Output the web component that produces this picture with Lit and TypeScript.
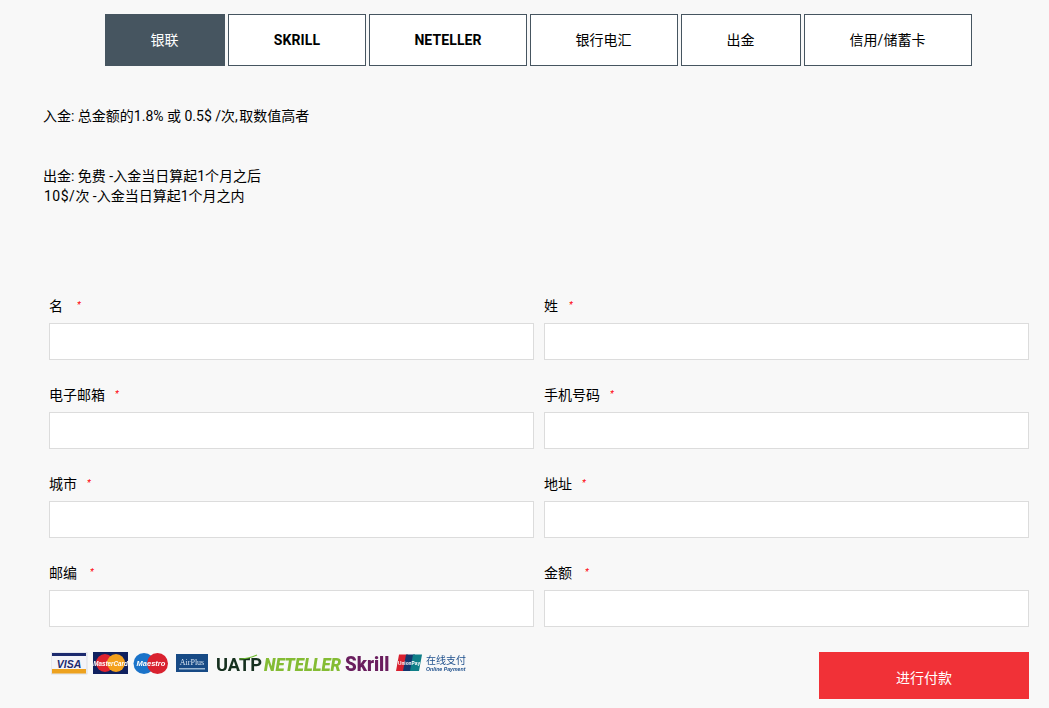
import { LitElement, html, css, svg } from "lit";
import { customElement } from "lit/decorators.js";

const tabs = [
  { t: "银联", w: 120, cls: "on" },
  { t: "SKRILL", w: 138, cls: "brand" },
  { t: "NETELLER", w: 158, cls: "brand" },
  { t: "银行电汇", w: 148, cls: "" },
  { t: "出金", w: 120, cls: "" },
  { t: "信用/储蓄卡", w: 168, cls: "" },
];
const fields = [
  ["名", 14], ["姓", 11], ["电子邮箱", 10], ["手机号码", 10],
  ["城市", 10], ["地址", 10], ["邮编", 13], ["金额", 13],
] as [string, number][];

const logos = svg`
  <svg class="logos" width="416" height="24" viewBox="51 652 416 24" xmlns="http://www.w3.org/2000/svg">
    <rect x="51" y="652" width="36" height="22" fill="#f4f4f8" stroke="#c9cbd8" stroke-width=".6"/>
    <rect x="52" y="653" width="34" height="3" fill="#1c2a6e"/>
    <rect x="52" y="669" width="34" height="4.5" fill="#eda21f"/>
    <text x="69" y="667.5" text-anchor="middle" font-family="Liberation Sans" font-size="10.5" font-weight="700" font-style="italic" fill="#1c2a6e">VISA</text>

    <rect x="93" y="652" width="35" height="22" fill="#10215f"/>
    <circle cx="105" cy="663" r="9" fill="#e0232e"/>
    <circle cx="116" cy="663" r="9" fill="#f4a11d"/>
    <text transform="translate(110.5 665.5) scale(.9 1)" text-anchor="middle" font-family="Liberation Sans" font-size="7" font-weight="700" font-style="italic" fill="#fff">MasterCard</text>

    <circle cx="144" cy="663.5" r="10.5" fill="#1a73c9"/>
    <circle cx="157.5" cy="663.5" r="10.5" fill="#d9222f"/>
    <text x="151" y="666" text-anchor="middle" font-family="Liberation Sans" font-size="7.5" font-weight="700" font-style="italic" fill="#fff">Maestro</text>

    <rect x="176" y="654" width="32" height="18" fill="#174a85"/>
    <text x="192" y="665" text-anchor="middle" font-family="Liberation Serif" font-size="8" fill="#d8e4f0">AirPlus</text>
    <rect x="179" y="668" width="26" height="1.5" fill="#9cb7d2"/>

    <text transform="translate(216 671) scale(.96 1)" font-family="Roboto" font-size="19" font-weight="700" fill="#16301f">UATP</text>
    <path d="M239 659 Q248 659 257 655" fill="none" stroke="#6fbd2e" stroke-width="1.2"/>

    <text transform="translate(264 671) scale(.88 1)" font-family="Roboto" font-size="19" font-weight="900" font-style="italic" fill="#84bc34">NETELLER</text>

    <text transform="translate(345 671) scale(.89 1)" font-family="Roboto" font-size="21" font-weight="900" fill="#6a1e5e">Skrill</text>

    <path d="M399 654.5h9l-3 16.5h-9z" fill="#d8202f"/>
    <path d="M406 654.5h9l-3 16.5h-9z" fill="#12386e"/>
    <path d="M413 654.5h9l-3 16.5h-9z" fill="#0f7f88"/>
    <text transform="translate(409 664.5) scale(.8 1)" text-anchor="middle" font-family="Liberation Sans" font-size="6" font-weight="700" fill="#fff">UnionPay</text>
    <text x="426" y="664" font-family="Noto Sans CJK SC" font-size="10" fill="#1d4f8c">在线支付</text>
    <text transform="translate(426 671) scale(.95 1)" font-family="Liberation Sans" font-size="5.5" font-weight="700" font-style="italic" fill="#1d4f8c">Online Payment</text>
  </svg>`;

@customElement("app-root")
export class AppRoot extends LitElement {
  static styles = css`
    :host {
      display: block;
      height: 708px;
      overflow: hidden;
      background: #f8f8f8;
      color: #000;
      font: 14px/20px "Roboto", "Noto Sans CJK SC", sans-serif;
    }
    .tabs {
      display: flex;
      gap: 3px;
      padding: 14px 0 0 105px;
    }
    .tab {
      box-sizing: border-box;
      height: 52px;
      padding-right: 1px;
      display: flex;
      align-items: center;
      justify-content: center;
      background: #fff;
      border: 1px solid #465560;
    }
    .tab.on {
      background: #465560;
      color: #fff;
    }
    .tab.brand {
      padding-right: 0;
      font-weight: 700;
      letter-spacing: 0.1px;
    }
    .info {
      padding: 40px 0 0 43px;
    }
    .info p {
      margin: 0 0 40px;
    }
    .wide {
      letter-spacing: 0.5px;
      margin-left: 1px;
    }
    .tight {
      letter-spacing: -1px;
    }
    .form {
      display: grid;
      grid-template-columns: 485px 485px;
      column-gap: 10px;
      row-gap: 25px;
      padding: 50px 0 0 49px;
    }
    label {
      display: flex;
      height: 20px;
      margin-bottom: 7px;
    }
    .star {
      color: #f00;
      font-size: 9px;
      font-style: italic;
      line-height: 18px;
    }
    .input {
      box-sizing: border-box;
      display: block;
      width: 100%;
      height: 37px;
      border: 1px solid #dcdcdc;
      background: #fff;
      padding: 0;
      outline: none;
    }
    .foot {
      display: flex;
      justify-content: space-between;
      align-items: flex-start;
      padding: 25px 20px 0 51px;
    }
    .logos {
      display: block;
      filter: blur(0.3px);
    }
    .pay {
      width: 210px;
      height: 47px;
      border: 0;
      padding: 5px 0 0;
      background: #f13137;
      color: #fff;
      font: inherit;
    }
  `;

  render() {
    return html`
      <nav class="tabs">
        ${tabs.map(
          (t) => html`<div class="tab ${t.cls}" style="width:${t.w}px">${t.t}</div>`
        )}
      </nav>
      <section class="info">
        <p>入金: 总金额的1.8% 或 0.5$ /次<span class="tight">, </span>取数值高者</p>
        <p>出金: 免费 -入金当日算起1个月之后<br /><span class="wide">10$/</span>次 -入金当日算起1个月之内</p>
      </section>
      <form class="form">
        ${fields.map(
          ([name, gap]) => html`<div>
            <label>${name}<span class="star" style="margin-left:${gap}px">*</span></label>
            <input class="input" type="text" />
          </div>`
        )}
      </form>
      <div class="foot">
        ${logos}
        <button class="pay" type="button">进行付款</button>
      </div>
    `;
  }
}
